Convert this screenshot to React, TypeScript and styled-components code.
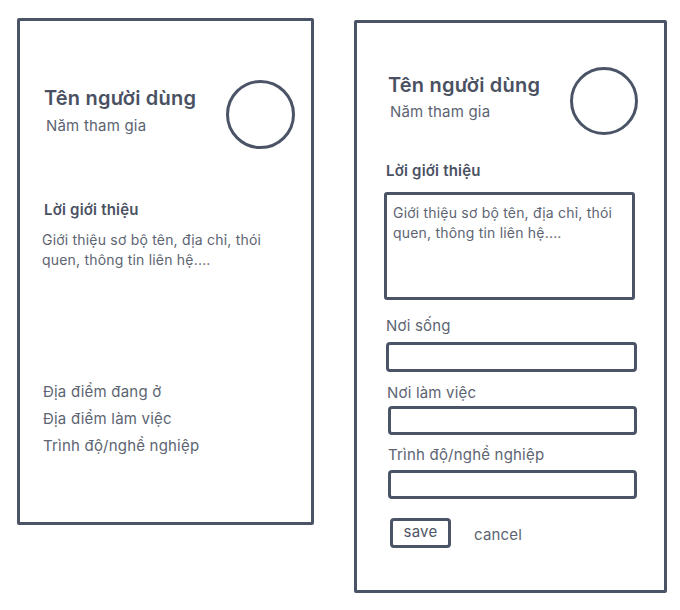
import styled, { createGlobalStyle } from "styled-components";

const ink = "#4b5467";
const text = "#5d6472";

const GlobalStyle = createGlobalStyle`
  html, body {
    margin: 0;
    padding: 0;
    background: #ffffff;
  }
  body {
    font-family: Inter, "Noto Sans", "DejaVu Sans", sans-serif;
    color: ${text};
    letter-spacing: 0.2px;
  }
  * {
    box-sizing: border-box;
  }
`;

export default function App() {
  return (
    <>
      <GlobalStyle />
      <Page>
        <ViewCard>
          <Header $top={59} $indent={2}>
            <NameBlock $offset={6} $gap={6}>
              <UserName>Tên người dùng</UserName>
              <Joined>Năm tham gia</Joined>
            </NameBlock>
            <Avatar $size={69} />
          </Header>

          <SectionTitle $top={52}>Lời giới thiệu</SectionTitle>
          <Bio>
            Giới thiệu sơ bộ tên, địa chỉ, thói
            <br />
            quen, thông tin liên hệ....
          </Bio>

          <InfoList>
            <InfoItem>Địa điểm đang ở</InfoItem>
            <InfoItem>Địa điểm làm việc</InfoItem>
            <InfoItem>Trình độ/nghề nghiệp</InfoItem>
          </InfoList>
        </ViewCard>

        <EditCard>
          <Header $top={44} $indent={4}>
            <NameBlock $offset={6} $gap={5}>
              <UserName>Tên người dùng</UserName>
              <Joined>Năm tham gia</Joined>
            </NameBlock>
            <Avatar $size={68} />
          </Header>

          <SectionTitle $top={27}>Lời giới thiệu</SectionTitle>
          <BioBox
            readOnly
            defaultValue={"Giới thiệu sơ bộ tên, địa chỉ, thói\nquen, thông tin liên hệ...."}
          />

          <FieldLabel $top={16} $indent={2}>Nơi sống</FieldLabel>
          <FieldInput $top={6} $indent={2} $height={30} />

          <FieldLabel $top={11} $indent={3}>Nơi làm việc</FieldLabel>
          <FieldInput $top={3} $indent={4} $height={29} />

          <FieldLabel $top={10} $indent={4}>Trình độ/nghề nghiệp</FieldLabel>
          <FieldInput $top={5} $indent={4} $height={29} />

          <Actions>
            <SaveButton type="button">save</SaveButton>
            <CancelButton type="button">cancel</CancelButton>
          </Actions>
        </EditCard>
      </Page>
    </>
  );
}

const Page = styled.div`
  display: flex;
  align-items: flex-start;
  gap: 40px;
  padding: 18px 0 0 17px;
  width: 680px;
  height: 610px;
`;

const Card = styled.section`
  display: flex;
  flex-direction: column;
  border: 3px solid ${ink};
  border-radius: 2px;
  background: #ffffff;
`;

const ViewCard = styled(Card)`
  width: 297px;
  height: 507px;
  padding: 0 16px 0 22px;
`;

const EditCard = styled(Card)`
  width: 313px;
  height: 573px;
  margin-top: 2px;
  padding: 0 26px 0 27px;
`;

const Header = styled.div<{ $top: number; $indent: number }>`
  display: flex;
  justify-content: space-between;
  align-items: flex-start;
  margin-top: ${(p) => p.$top}px;
  padding-left: ${(p) => p.$indent}px;
`;

const NameBlock = styled.div<{ $offset: number; $gap: number }>`
  display: flex;
  flex-direction: column;
  gap: ${(p) => p.$gap}px;
  margin-top: ${(p) => p.$offset}px;
`;

const UserName = styled.h1`
  margin: 0;
  font-size: 20px;
  line-height: 24px;
  font-weight: 600;
  color: #4a5162;
`;

const Joined = styled.div`
  padding-left: 2px;
  font-size: 15px;
  line-height: 20px;
  color: ${text};
`;

const Avatar = styled.div<{ $size: number }>`
  width: ${(p) => p.$size}px;
  height: ${(p) => p.$size}px;
  border: 3px solid ${ink};
  border-radius: 50%;
  flex-shrink: 0;
`;

const SectionTitle = styled.h2<{ $top: number }>`
  margin: ${(p) => p.$top}px 0 0 2px;
  font-size: 15px;
  line-height: 18px;
  font-weight: 600;
  color: #4a5162;
`;

const Bio = styled.p`
  margin: 11px 0 0 0;
  font-size: 14px;
  line-height: 20px;
  color: ${text};
`;

const InfoList = styled.ul`
  list-style: none;
  margin: 108px 0 0 1px;
  padding: 0;
  display: flex;
  flex-direction: column;
`;

const InfoItem = styled.li`
  font-size: 15px;
  line-height: 27px;
  color: ${text};
`;

const BioBox = styled.textarea`
  margin-top: 12px;
  width: 251px;
  height: 108px;
  padding: 8px 6px;
  border: 3px solid ${ink};
  border-radius: 3px;
  resize: none;
  font-family: inherit;
  letter-spacing: inherit;
  font-size: 14px;
  line-height: 20px;
  color: ${text};
  outline: none;
  overflow: hidden;
`;

const FieldLabel = styled.label<{ $top: number; $indent: number }>`
  margin: ${(p) => p.$top}px 0 0 ${(p) => p.$indent}px;
  font-size: 15px;
  line-height: 20px;
  color: ${text};
`;

const FieldInput = styled.input<{ $top: number; $indent: number; $height: number }>`
  margin: ${(p) => p.$top}px 0 0 ${(p) => p.$indent}px;
  width: ${(p) => 253 - p.$indent}px;
  height: ${(p) => p.$height}px;
  border: 3px solid ${ink};
  border-radius: 4px;
  outline: none;
  background: #ffffff;
`;

const Actions = styled.div`
  display: flex;
  align-items: center;
  gap: 23px;
  margin: 19px 0 0 6px;
`;

const SaveButton = styled.button`
  width: 61px;
  height: 30px;
  padding: 0 0 3px;
  border: 3px solid ${ink};
  border-radius: 4px;
  background: #ffffff;
  font-family: inherit;
  letter-spacing: inherit;
  font-size: 15px;
  color: #4f5666;
  cursor: pointer;
`;

const CancelButton = styled.button`
  border: none;
  background: transparent;
  padding: 0;
  margin-top: 2px;
  font-family: inherit;
  letter-spacing: inherit;
  font-size: 15px;
  color: ${text};
  cursor: pointer;
`;
